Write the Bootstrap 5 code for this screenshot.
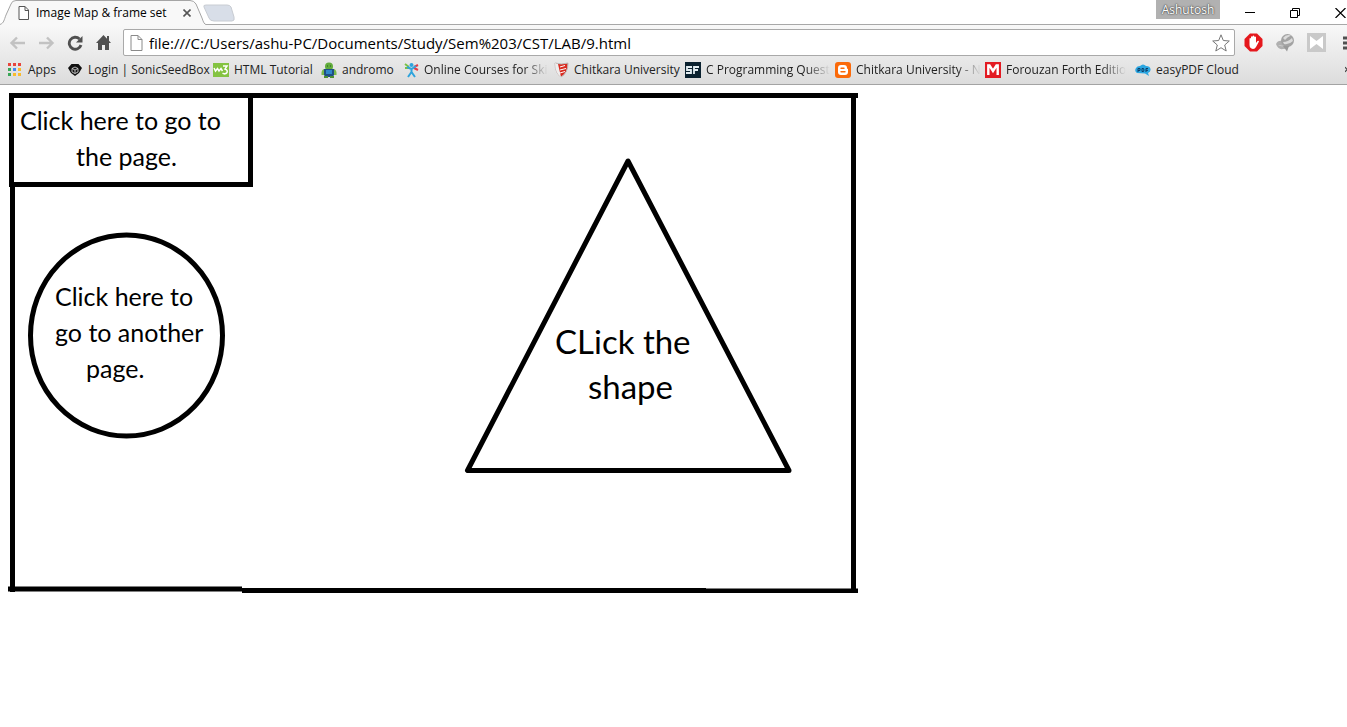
<!DOCTYPE html>
<html lang="en">
<head>
<meta charset="utf-8">
<meta name="viewport" content="width=device-width, initial-scale=1">
<title>Image Map &amp; frame set</title>
<link href="https://cdn.jsdelivr.net/npm/bootstrap@5.3.0/dist/css/bootstrap.min.css" rel="stylesheet">
<style>
  body { font-family: "Open Sans", "Noto Sans", sans-serif; font-size: 12px; line-height: 16px; color: #000; background: #fff; overflow-x: hidden; }
  svg { display: block; flex-shrink: 0; }
  button { font: inherit; color: inherit; padding: 0; border: 0; background: none; }
  .title-strip { height: 24px; }
  .page-tab { width: 206px; height: 24px; padding: 0 15px 0 18px; }
  .tab-shape { inset: 0; z-index: 0; }
  .tab-content-row { z-index: 1; gap: 6px; padding-top: 2px; }
  .new-tab { margin: 4px 0 0 -3px; }
  .user-tag { background: #b1b1b1; color: #fff; width: 64px; height: 19px; line-height: 18px; text-align: center; text-shadow: 0 0 2px #333, 0 0 1px #333; }
  .win-buttons { gap: 35px; padding-right: 1px; margin-left: 25px; }
  .browser-bars { background: linear-gradient(#f8f8f8, #dcdcdc); border-top: 1px solid #a8a8a8; border-bottom: 1px solid #a3a3a3; height: 61px; }
  .nav-row { height: 35px; padding: 0 0 0 9px; gap: 9px; }
  .nav-icons { gap: 12px; width: 105px; }
  .address { height: 27px; background: #fff; border: 1px solid #a9a9a9; border-radius: 2px; padding: 0 4px 0 6px; gap: 6px; }
  .address input { border: 0; outline: 0; padding: 0; font-size: 15px; line-height: 20px; min-width: 0; color: #000; background: none; }
  .ext-icons { gap: 12px; width: 103px; overflow: hidden; }
  .bookmarks { display: grid; grid-template-columns: 60px 145px 108px 83px 150px 131px 150px 150px 150px 1fr; padding: 2px 0 0 8px; }
  .bookmarks a { color: #222; text-decoration: none; gap: 5px; min-width: 0; }
  .bookmarks span { white-space: nowrap; }
  .bookmarks .fade-end span { -webkit-mask-image: linear-gradient(to left, transparent, #000 24px); mask-image: linear-gradient(to left, transparent, #000 24px); }
  .map-page { padding: 8px; }
  .map-page a { text-decoration: none; }
  .map-page text { font-family: Lato, "Open Sans", sans-serif; fill: #000; font-size: 25px; }
  .map-page .big-label { font-size: 33px; }
</style>
</head>
<body>
<header>
  <div class="title-strip d-flex align-items-start">
    <div class="page-tab position-relative">
      <svg class="tab-shape position-absolute" width="206" height="25" viewBox="0 0 206 25"><path d="M0 24C4 23 4 20 6 15L11 4Q12 1 16 1H190Q194 1 196 4L202 18Q204 24 206 24V25H0Z" fill="#f8f8f8"/><path d="M0 24.500C4 23 4 20 6 15L11 4Q12 .5 16 .5H190Q194 .5 196 4L202 18Q204 24.500 206 24.500" fill="none" stroke="#a5a5a5"/></svg>
      <div class="tab-content-row position-relative d-flex align-items-center h-100">
        <svg width="12" height="14" viewBox="0 0 12 14"><path d="M1 .5H7L10.500 4V13.500H1ZM7 .5V4.500H10.500" fill="#fff" stroke="#555"/></svg>
        <span class="flex-grow-1 text-nowrap">Image Map &amp; frame set</span>
        <button aria-label="Close tab"><svg width="8" height="8" viewBox="0 0 8 8"><path d="M.5 .5L7.500 7.500M7.500 .5L.5 7.500" stroke="#555" stroke-width="1.600"/></svg></button>
      </div>
    </div>
    <button aria-label="New tab" class="new-tab position-relative"><svg width="32" height="18" viewBox="0 0 32 18"><path d="M3 1H24Q27 1 28 3L31 13Q32 17 29 17H11Q7 17 6 14L1 3Q0 1 3 1Z" fill="#d8dee8" stroke="#c8ccd2"/></svg></button>
    <button class="user-tag ms-auto">Ashutosh</button>
    <div class="win-buttons d-flex mt-2">
      <button aria-label="Minimize"><svg width="10" height="10" viewBox="0 0 10 10"><path d="M0 4.500H10" stroke="#000"/></svg></button>
      <button aria-label="Restore"><svg width="10" height="10" viewBox="0 0 10 10"><path d="M.5 2.500H7.500V9.500H.5ZM2.500 2.500V.5H9.500V7.500H7.500" fill="none" stroke="#000"/></svg></button>
      <button aria-label="Close"><svg width="11" height="10" viewBox="0 0 11 10"><path d="M.5 0L10.500 10M10.500 0L.5 10" stroke="#000" stroke-width="1.200"/></svg></button>
    </div>
  </div>

  <div class="browser-bars">
    <div class="nav-row d-flex align-items-center">
      <div class="nav-icons d-flex align-items-center">
        <button aria-label="Back"><svg width="17" height="14" viewBox="0 0 17 14"><path d="M16 7H3M8 1.500L2.500 7L8 12.500" fill="none" stroke="#c2c2c2" stroke-width="2.400"/></svg></button>
        <button aria-label="Forward"><svg width="17" height="14" viewBox="0 0 17 14"><path d="M1 7H14M9 1.500L14.500 7L9 12.500" fill="none" stroke="#c2c2c2" stroke-width="2.400"/></svg></button>
        <button aria-label="Reload"><svg width="17" height="16" viewBox="0 0 17 16"><path d="M14 10A6 6 0 1 1 12.500 4" fill="none" stroke="#505050" stroke-width="2.800"/><path d="M15.500 1V7.500H9Z" fill="#505050"/></svg></button>
        <button aria-label="Home"><svg width="15" height="15" viewBox="0 0 15 15"><path d="M7.500 0L0 8H2V15H6V10H9V15H13V8H15L13 5.800V1H11V3.700Z" fill="#505050"/></svg></button>
      </div>
      <div class="address d-flex align-items-center flex-grow-1">
        <svg width="13" height="16" viewBox="0 0 13 16"><path d="M1 .5H8L12 4.500V15.500H1ZM8 .5V4.500H12" fill="#fff" stroke="#8a8a8a"/></svg>
        <input class="flex-grow-1" type="text" aria-label="Address" value="file:///C:/Users/ashu-PC/Documents/Study/Sem%203/CST/LAB/9.html">
        <button aria-label="Bookmark this page"><svg width="18" height="18" viewBox="0 0 18 18"><path d="M9 .8L11.300 6.500L17.300 7L12.700 11L14.200 17L9 13.700L3.800 17L5.300 11L.7 7L6.700 6.500Z" fill="#fff" stroke="#777"/></svg></button>
      </div>
      <div class="ext-icons d-flex align-items-center">
        <button aria-label="AdBlock"><svg width="19" height="19" viewBox="0 0 19 19"><path d="M6 .5H13L18.500 6V13L13 18.500H6L.5 13V6Z" fill="#e5181d"/><path d="M5.500 10V5.500Q6.300 4.500 7 5.500V9V3.700Q7.800 2.700 8.600 3.700V8.500V3Q9.500 2 10.300 3V8.500V4Q11.200 3 12 4V10L13.500 8Q14.700 7.500 15 8.500L12 14Q11 16 9 16Q5.500 15.500 5.500 12Z" fill="#fff"/></svg></button>
        <button aria-label="Download manager"><svg width="20" height="19" viewBox="0 0 20 19"><path d="M1 11Q3 7 7 8L14 12Q14 16 8 16Q3 17 1 11Z" fill="#b0b0b0"/><circle cx="12.500" cy="7.500" r="6.500" fill="#a3a3a3"/><path d="M8 5Q11 1 16 2.500Q12 4 10 7ZM8 9Q13 9 17 5L18 8Q14 12 9 11ZM3 12Q6 14 9 13" fill="#dcdcdc"/><path d="M8 13L12 18.500L14 13Z" fill="#9a9a9a"/></svg></button>
        <button aria-label="Mail"><svg width="19" height="19" viewBox="0 0 19 19"><path d="M0 0H19V19H0Z" fill="#c9c9c9"/><path d="M3 3L9.500 8L16 3V16L9.500 11L3 16Z" fill="#fff"/></svg></button>
        <button class="ms-1" aria-label="Menu"><svg width="14" height="14" viewBox="0 0 14 14"><path d="M1 2H14M1 7H14M1 12H14" stroke="#505050" stroke-width="3"/></svg></button>
      </div>
    </div>
    <nav class="bookmarks" aria-label="Bookmarks">
      <a href="#" class="d-flex align-items-center"><svg width="15" height="14" viewBox="0 0 15 14"><path d="M0 0H3V3H0ZM5 0H8V3H5ZM10 0H13V3H10Z" fill="#e8453c"/><path d="M0 5H3V8H0Z" fill="#3aa757"/><path d="M5 5H8V8H5Z" fill="#4688f1"/><path d="M10 5H13V8H10ZM5 10H8V13H5ZM10 10H13V13H10Z" fill="#f9bb2d"/><path d="M0 10H3V13H0Z" fill="#3aa757"/></svg><span>Apps</span></a>
      <a href="#" class="d-flex align-items-center"><svg width="15" height="14" viewBox="0 0 15 14"><path d="M3.500 1H10.500L14 5L11 10L7 13L3 10L0 5Z" fill="#111"/><path d="M7 4L10 5.500V9L7 10.500L4 9V5.500ZM4 5.500L7 7L10 5.500M7 7V10.500" fill="none" stroke="#ddd" stroke-width=".8"/></svg><span>Login | SonicSeedBox</span></a>
      <a href="#" class="d-flex align-items-center"><svg width="16" height="14" viewBox="0 0 16 14"><path d="M0 0H16V14H0Z" fill="#84c341"/><path d="M1 5L2.500 8L4.500 5.500L6 8L8 5.500L9.500 8M10 3H14L12 6Q15 7 14 9.500Q12 12 9.500 10" fill="none" stroke="#fff" stroke-width="1.500"/></svg><span>HTML Tutorial</span></a>
      <a href="#" class="d-flex align-items-center"><svg width="16" height="16" viewBox="0 0 16 16"><circle cx="8" cy="4.500" r="4" fill="#62ac3c"/><path d="M6 4H7M9 4H10" stroke="#235b1b" stroke-width="1.200"/><path d="M3 7Q0 8 .5 13H3ZM13 7Q16 8 15.500 13H13Z" fill="#78b94a"/><path d="M3 7H13V13Q12 15 8 15Q4 15 3 13Z" fill="#1f4f86"/><path d="M5 8H11V12H5Z" fill="#2f86c9"/><path d="M3 14H7V16H3ZM9 14H13V16H9Z" fill="#4c8f32"/></svg><span>andromo</span></a>
      <a href="#" class="fade-end d-flex align-items-center"><svg width="15" height="16" viewBox="0 0 15 16"><path d="M1 2L5 5M1 6H5" stroke="#7ac143" stroke-width="2"/><path d="M10 5L14 3M10 6L14 8" stroke="#e53b45" stroke-width="2"/><circle cx="7.500" cy="3" r="2" fill="#2ea3dc"/><path d="M3 5L7.500 7L12 4M7.500 6V10L4 15M7.500 10L11 15" fill="none" stroke="#2ea3dc" stroke-width="2"/></svg><span>Online Courses for Ski</span></a>
      <a href="#" class="d-flex align-items-center"><svg width="15" height="16" viewBox="0 0 15 16"><path d="M1 1Q7 3 14 1Q14 11 7 15Q1 11 1 1Z" fill="#d92b20" stroke="#bbb"/><path d="M1 1Q3 2 4 2L7 15Q1 11 1 1Z" fill="#eee"/><path d="M6 5L11 3.500M6 8L12 6.500M6 11L11 9.500" stroke="#fff"/></svg><span>Chitkara University</span></a>
      <a href="#" class="fade-end d-flex align-items-center"><svg width="16" height="16" viewBox="0 0 16 16"><path d="M0 0H16V16H0Z" fill="#0b2230"/><path d="M7 5H2V8H6V11H1M9 12V5H14M9 8H13" fill="none" stroke="#e4eef2" stroke-width="1.800"/></svg><span>C Programming Quest</span></a>
      <a href="#" class="fade-end d-flex align-items-center"><svg width="16" height="16" viewBox="0 0 16 16"><rect width="16" height="16" rx="3" fill="#fb6a0a"/><path d="M6 3H9Q12 3 12 6Q12 7 13 7V10Q13 13 10 13H6Q3 13 3 10V6Q3 3 6 3Z" fill="#fff"/><path d="M6 6.200H9M6 9.800H10" stroke="#fb6a0a" stroke-width="1.400" stroke-linecap="round"/></svg><span>Chitkara University - N</span></a>
      <a href="#" class="fade-end d-flex align-items-center"><svg width="16" height="16" viewBox="0 0 16 16"><path d="M0 0H16V16H0Z" fill="#e31b23"/><path d="M3.300 13V3.500H4.500L8 9L11.500 3.500H12.700V13" fill="none" stroke="#fff" stroke-width="2.400"/></svg><span>Forouzan Forth Editio</span></a>
      <div class="d-flex align-items-center justify-content-between">
        <a href="#" class="d-flex align-items-center"><svg width="16" height="14" viewBox="0 0 16 14"><path d="M2 10Q-1 8 1 5Q2 3 5 3Q8 0 11 3Q15 3 15.500 6Q16 9 13 10L14 13L10 10.500Z" fill="#2ba6e1"/><path d="M3 9V5.500H5V7.500H3M7 5.500V8.500H8.500L9 7L8.500 5.500ZM11 9V5.500H13M11 7.300H13" fill="none" stroke="#0d3c66"/></svg><span>easyPDF Cloud</span></a>
        <button aria-label="More bookmarks"><svg width="2" height="8" viewBox="0 0 2 8"><path d="M0 1L2 3.500L0 6" fill="none" stroke="#444" stroke-width="1.200"/></svg></button>
      </div>
    </nav>
  </div>
</header>

<main class="map-page">
  <svg width="850" height="500" viewBox="8 93 850 500" role="img" aria-label="Image map">
    <g fill="none" stroke="#000" stroke-width="5">
      <path d="M9 95.500H858M853.500 95V592M12.500 184V592"/>
      <path d="M8 589H242M242 590.500H706M706 591H858"/>
    </g>
    <a href="#rect"><rect x="11.500" y="95.500" width="239" height="89" fill="#fff" stroke="#000" stroke-width="5"/>
      <text x="20" y="130">Click here to go to</text><text x="76" y="166">the page.</text></a>
    <a href="#circle"><ellipse cx="126.500" cy="335.500" rx="96" ry="100.500" fill="#fff" stroke="#000" stroke-width="5"/>
      <text x="55" y="306">Click here to</text><text x="55" y="342">go to another</text><text x="86" y="378">page.</text></a>
    <a href="#triangle"><path d="M628 161L467.500 470.500H789Z" fill="#fff" stroke="#000" stroke-width="5" stroke-linejoin="round"/>
      <text class="big-label" x="555" y="354">CLick the</text><text class="big-label" x="588" y="399">shape</text></a>
  </svg>
</main>
<script src="https://cdn.jsdelivr.net/npm/bootstrap@5.3.0/dist/js/bootstrap.bundle.min.js"></script>
</body>
</html>
